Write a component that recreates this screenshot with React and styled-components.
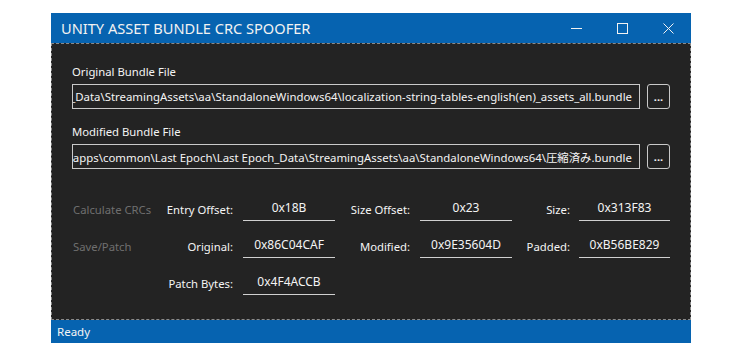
import React from "react";
import styled, { createGlobalStyle } from "styled-components";

const GlobalStyle = createGlobalStyle`
  body {
    margin: 0;
    background: #ffffff;
    font-family: "Noto Sans", "Noto Sans CJK JP", sans-serif;
  }
`;

const Page = styled.div`
  padding: 13px 0 0 51px;
`;

const Window = styled.div`
  width: 640px;
  background: #232323;
  display: flex;
  flex-direction: column;
`;

const TitleBar = styled.div`
  height: 30px;
  background: #0663b0;
  display: flex;
  align-items: center;
  color: #f2f2f2;
`;

const Title = styled.div`
  flex: 1;
  padding-left: 10px;
  font-size: 14.6px;
`;

const CaptionButton = styled.div`
  width: 46px;
  height: 30px;
  display: flex;
  align-items: center;
  justify-content: center;
`;

const Content = styled.div`
  height: 277px;
  box-sizing: border-box;
  border: 1px dashed #8a8a8a;
  padding: 20px 20px 0 20px;
  color: #f4f4f4;
  background-color: #232323;
  background-image: radial-gradient(#2d2d2d 0.6px, transparent 0.6px);
  background-size: 8px 8px;
`;

const FieldLabel = styled.div`
  font-size: 11.3px;
  height: 16px;
  line-height: 16px;
  margin-bottom: 4px;
`;

const FileRow = styled.div`
  display: flex;
  gap: 7px;
  margin-bottom: 15px;
`;

const PathBox = styled.div`
  width: 568px;
  height: 25px;
  box-sizing: border-box;
  border: 1px solid #c9c9c9;
  display: flex;
  align-items: center;
  justify-content: flex-end;
  overflow: hidden;
  white-space: nowrap;
  padding-right: 7px;
  font-size: 11.4px;
`;

const BrowseButton = styled.div`
  width: 23px;
  height: 25px;
  box-sizing: border-box;
  border: 1px solid #c9c9c9;
  border-radius: 3px;
  display: flex;
  align-items: flex-end;
  justify-content: center;
  font-size: 11px;
  font-weight: bold;
  line-height: 16px;
  padding-bottom: 3px;
`;

const Grid = styled.div`
  margin-top: 28px;
  display: grid;
  grid-template-columns: 90px 81px 92px 85px 92px 67px 91px;
  grid-auto-rows: 37px;
  font-size: 11.3px;
`;

const ActionLink = styled.div`
  color: #6f6f6f;
  display: flex;
  align-items: center;
  height: 24px;
  padding-left: 1px;
`;

const Label = styled.div`
  display: flex;
  align-items: center;
  justify-content: flex-end;
  height: 24px;
  padding-right: ${(p) => p.gap || 10}px;
`;

const Value = styled.div`
  height: 24px;
  box-sizing: border-box;
  border-bottom: 1px solid #d0d0d0;
  display: flex;
  justify-content: center;
  align-items: center;
  padding-bottom: 2px;
  font-size: 12px;
`;

const StatusBar = styled.div`
  height: 23px;
  background: #0663b0;
  color: #f4f4f4;
  font-size: 11.5px;
  display: flex;
  align-items: center;
  padding-left: 6px;
`;

const Empty = styled.div``;

const originalPath =
  "C:\\Program Files (x86)\\Steam\\steamapps\\common\\Last Epoch\\Last Epoch_Data\\StreamingAssets\\aa\\StandaloneWindows64\\localization-string-tables-english(en)_assets_all.bundle";
const modifiedPath =
  "C:\\Program Files (x86)\\Steam\\steamapps\\common\\Last Epoch\\Last Epoch_Data\\StreamingAssets\\aa\\StandaloneWindows64\\圧縮済み.bundle";

export default function App() {
  return (
    <Page>
      <GlobalStyle />
      <Window>
        <TitleBar>
          <Title>UNITY ASSET BUNDLE CRC SPOOFER</Title>
          <CaptionButton>
            <svg width="11" height="11" viewBox="0 0 11 11">
              <line x1="0" y1="5.5" x2="11" y2="5.5" stroke="#f2f2f2" strokeWidth="1" />
            </svg>
          </CaptionButton>
          <CaptionButton>
            <svg width="11" height="11" viewBox="0 0 11 11">
              <rect x="0.5" y="0.5" width="10" height="10" fill="none" stroke="#f2f2f2" strokeWidth="1" />
            </svg>
          </CaptionButton>
          <CaptionButton>
            <svg width="11" height="11" viewBox="0 0 11 11">
              <path d="M0.5 0.5 L10.5 10.5 M10.5 0.5 L0.5 10.5" stroke="#f2f2f2" strokeWidth="1" />
            </svg>
          </CaptionButton>
        </TitleBar>
        <Content>
          <FieldLabel>Original Bundle File</FieldLabel>
          <FileRow>
            <PathBox>{originalPath}</PathBox>
            <BrowseButton>...</BrowseButton>
          </FileRow>
          <FieldLabel>Modified Bundle File</FieldLabel>
          <FileRow>
            <PathBox>{modifiedPath}</PathBox>
            <BrowseButton>...</BrowseButton>
          </FileRow>
          <Grid>
            <ActionLink>Calculate CRCs</ActionLink>
            <Label>Entry Offset:</Label>
            <Value>0x18B</Value>
            <Label>Size Offset:</Label>
            <Value>0x23</Value>
            <Label gap={9}>Size:</Label>
            <Value>0x313F83</Value>

            <ActionLink>Save/Patch</ActionLink>
            <Label>Original:</Label>
            <Value>0x86C04CAF</Value>
            <Label>Modified:</Label>
            <Value>0x9E35604D</Value>
            <Label gap={9}>Padded:</Label>
            <Value>0xB56BE829</Value>

            <Empty />
            <Label>Patch Bytes:</Label>
            <Value>0x4F4ACCB</Value>
          </Grid>
        </Content>
        <StatusBar>Ready</StatusBar>
      </Window>
    </Page>
  );
}
